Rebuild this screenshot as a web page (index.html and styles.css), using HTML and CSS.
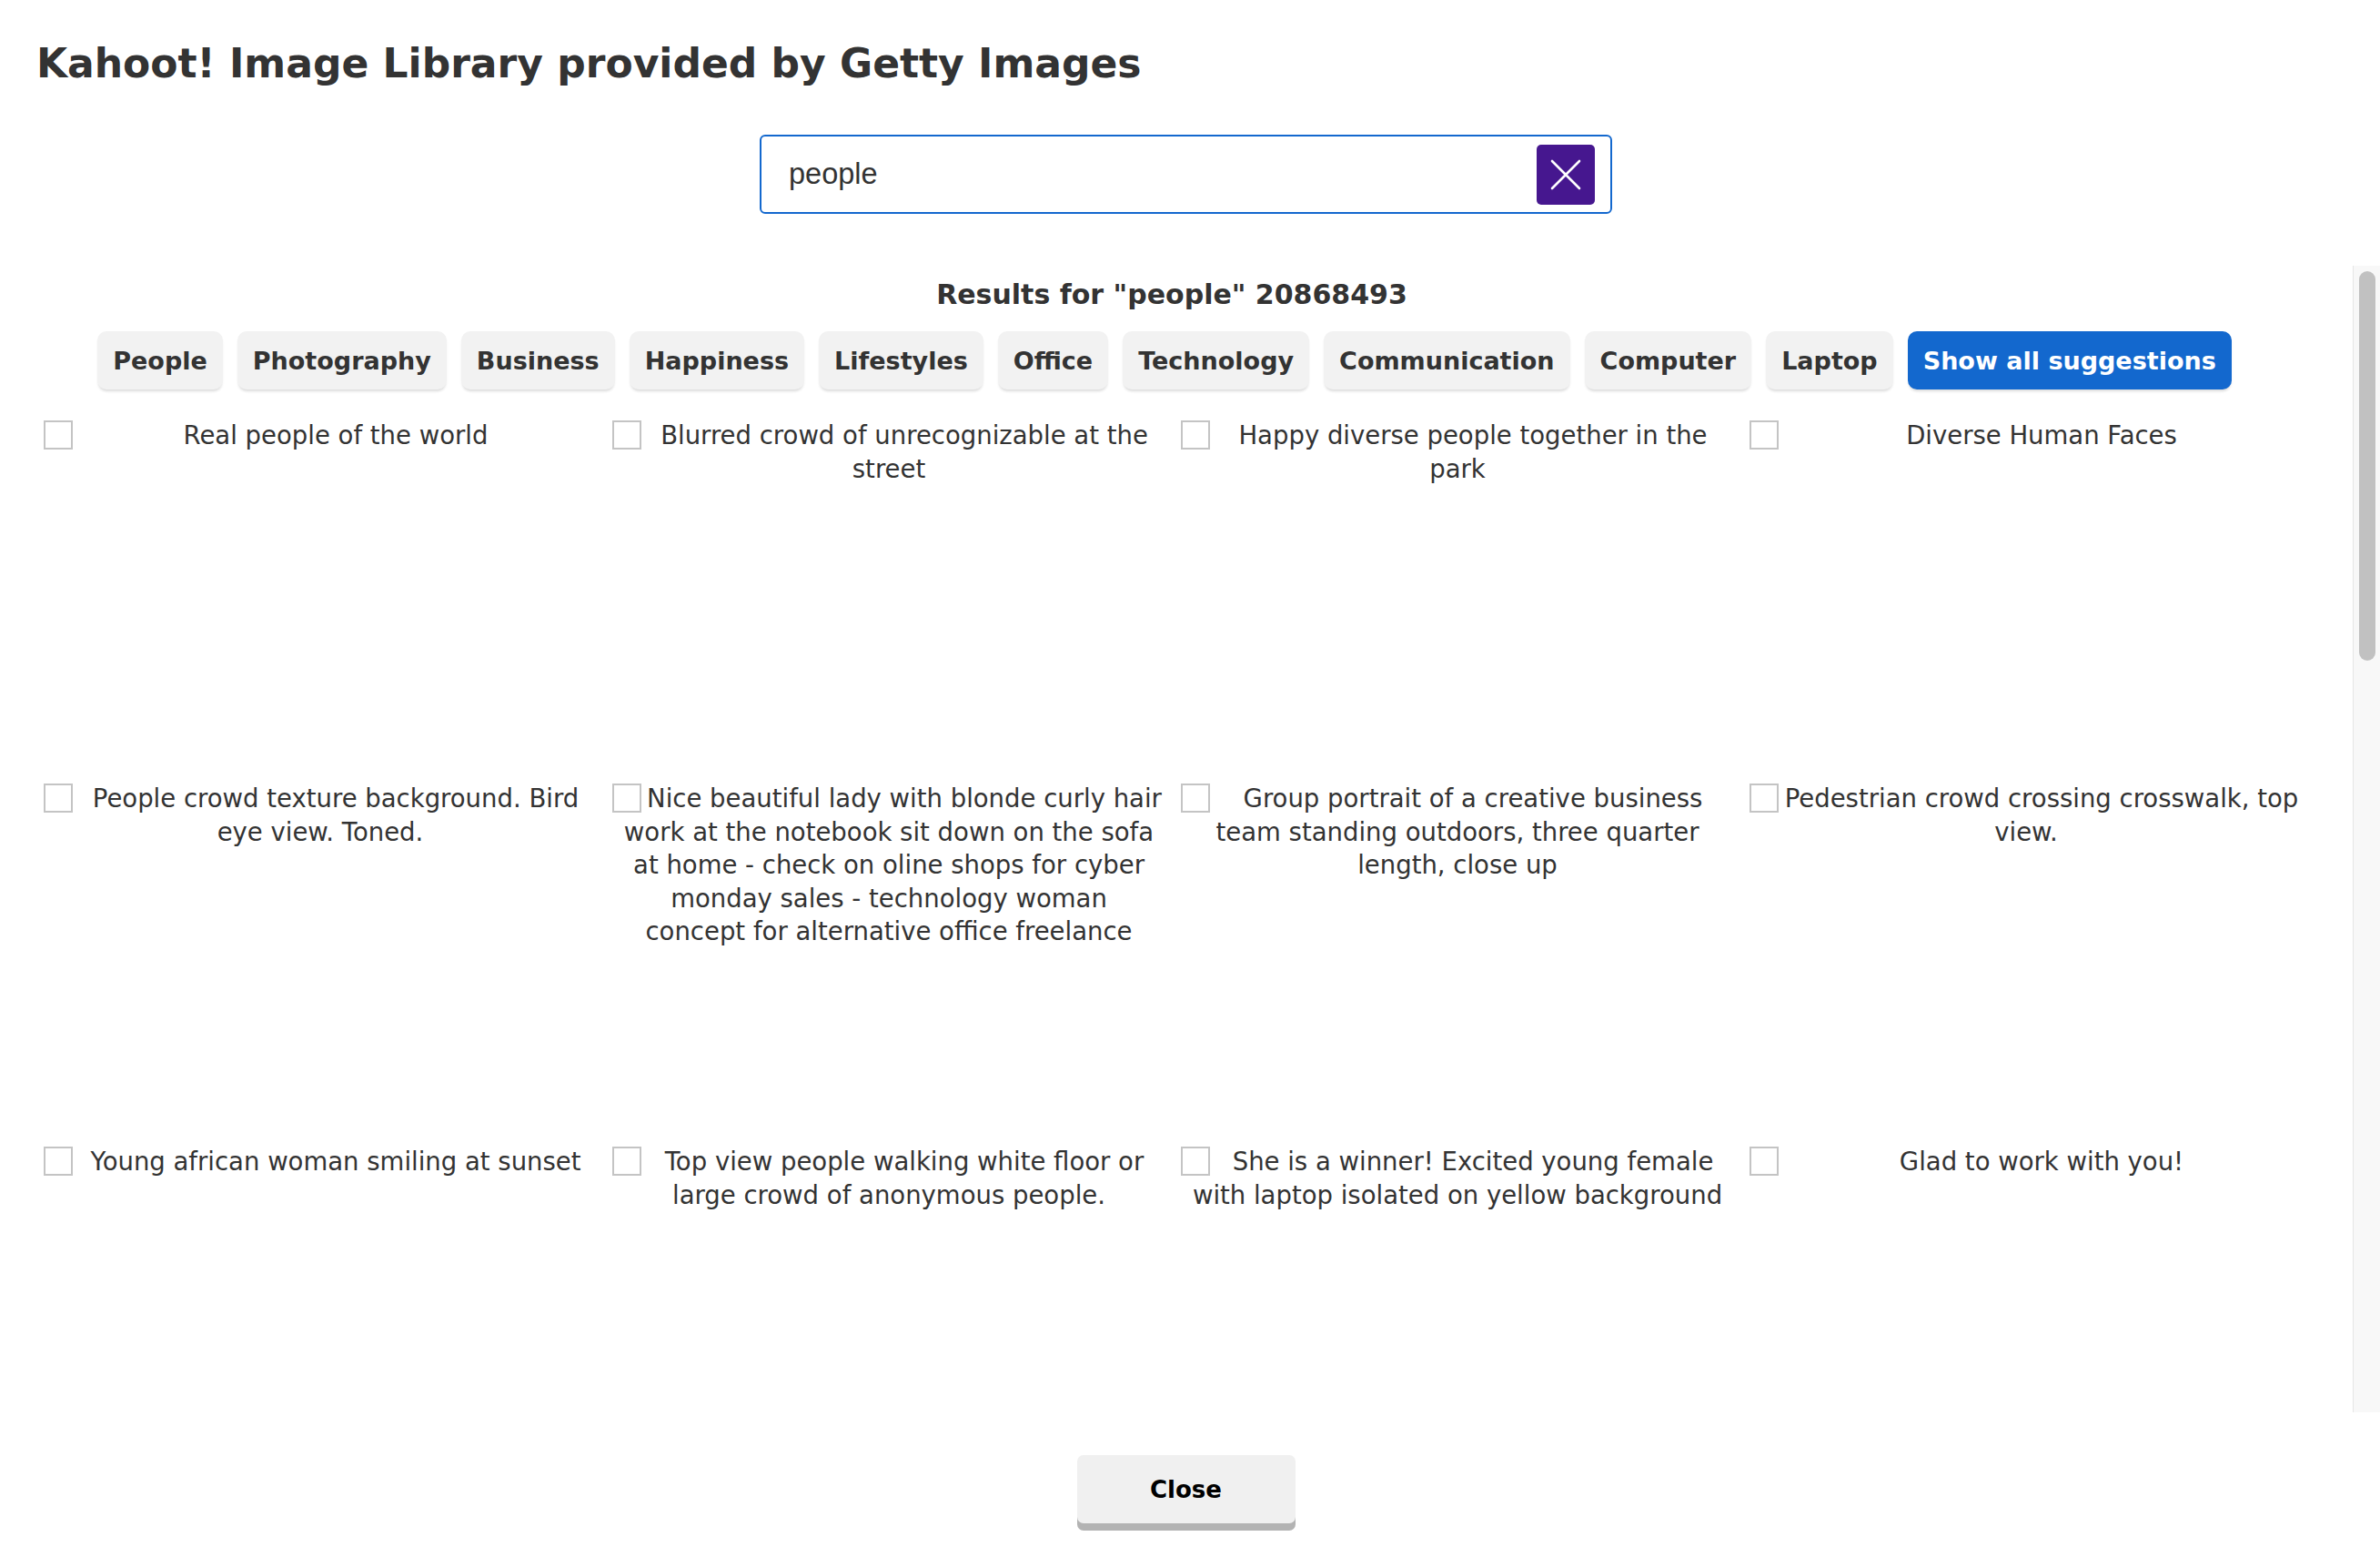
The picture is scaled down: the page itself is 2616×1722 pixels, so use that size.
FILE: index.html
```html
<!DOCTYPE html>
<html lang="en">
<head>
    <meta charset="UTF-8">
    <meta name="viewport" content="width=device-width, initial-scale=1.0">
    <title>Kahoot! Image Library</title>
    <link rel="stylesheet" href="styles.css">
</head>
<body>
    <div class="dialog">
        <h1 class="dialog-title">Kahoot! Image Library provided by Getty Images</h1>

        <div class="search">
            <input class="search-input" type="text" value="people" aria-label="Search images">
            <button class="search-clear" aria-label="Clear search">
                <svg width="34" height="34" viewBox="0 0 34 34">
                    <path d="M2 2 L32 32 M32 2 L2 32" stroke="#fff" stroke-width="2.6" stroke-linecap="round" fill="none"/>
                </svg>
            </button>
        </div>

        <div class="results-pane">
            <div class="results" id="results">
                <h2 class="results-title">Results for "people" 20868493</h2>
                <div class="suggestions">
                    <button class="chip">People</button>
                    <button class="chip">Photography</button>
                    <button class="chip">Business</button>
                    <button class="chip">Happiness</button>
                    <button class="chip">Lifestyles</button>
                    <button class="chip">Office</button>
                    <button class="chip">Technology</button>
                    <button class="chip">Communication</button>
                    <button class="chip">Computer</button>
                    <button class="chip">Laptop</button>
                    <button class="chip chip-primary">Show all suggestions</button>
                </div>

                <div class="image-grid">
                    <label class="image-card"><input type="checkbox" class="pick">Real people of the world</label>
                    <label class="image-card"><input type="checkbox" class="pick">Blurred crowd of unrecognizable at the street</label>
                    <label class="image-card"><input type="checkbox" class="pick">Happy diverse people together in the park</label>
                    <label class="image-card"><input type="checkbox" class="pick">Diverse Human Faces</label>

                    <label class="image-card"><input type="checkbox" class="pick">People crowd texture background. Bird eye view. Toned.</label>
                    <label class="image-card"><input type="checkbox" class="pick">Nice beautiful lady with blonde curly hair work at the notebook sit down on the sofa at home - check on oline shops for cyber monday sales - technology woman concept&nbsp;for alternative office freelance</label>
                    <label class="image-card"><input type="checkbox" class="pick">Group portrait of a creative business team standing outdoors, three quarter length, close up</label>
                    <label class="image-card"><input type="checkbox" class="pick">Pedestrian crowd crossing crosswalk, top view.</label>

                    <label class="image-card"><input type="checkbox" class="pick">Young african woman smiling at sunset</label>
                    <label class="image-card"><input type="checkbox" class="pick">Top view people walking white floor or large crowd of anonymous people.</label>
                    <label class="image-card"><input type="checkbox" class="pick">She is a winner! Excited young female with laptop isolated on yellow background</label>
                    <label class="image-card"><input type="checkbox" class="pick">Glad to work with you!</label>
                </div>
            </div>
            <!-- scroll indicator for the result list -->
            <div class="scrollbar"><div class="scrollbar-thumb"></div></div>
        </div>

        <div class="dialog-footer">
            <button class="close-btn">Close</button>
        </div>
    </div>
</body>
</html>
```

FILE: styles.css
```css
body {
    margin: 0;
    font-family: "DejaVu Sans", sans-serif;
    color: #333;
    background: #fff;
}
.dialog {
    height: 100vh;
    display: flex;
    flex-direction: column;
    overflow: hidden;
}
.dialog-title {
    margin: 0;
    padding: 44px 40px 0;
    font-size: 44px;
    line-height: 52px;
    font-weight: bold;
}

/* search field */
.search {
    display: flex;
    align-items: center;
    box-sizing: border-box;
    width: 937px;
    height: 87px;
    margin: 52px auto 0 calc(50% - 473px);
    padding: 0 17px 0 30px;
    border: 2px solid #1368ce;
    border-radius: 6px;
}
.search-input {
    flex: 1;
    border: none;
    outline: none;
    padding: 0;
    background: transparent;
    font-family: "Liberation Sans", Arial, sans-serif;
    font-size: 32.5px;
    color: #333;
}
.search-clear {
    width: 64px;
    height: 66px;
    padding: 0;
    border: none;
    border-radius: 5px;
    background: #46178f;
    display: flex;
    align-items: center;
    justify-content: center;
    cursor: pointer;
}

/* scrolling result list */
.results-pane {
    flex: 1;
    min-height: 0;
    display: flex;
    margin-top: 57px;
}
.results {
    flex: 1;
    min-width: 0;
    padding-top: 14px;
    overflow-y: auto;
}
.results::-webkit-scrollbar {
    display: none;
}
.scrollbar {
    width: 30px;
    box-sizing: border-box;
    background: #f8f8f8;
    border-left: 1px solid #e6e6e6;
}
.scrollbar-thumb {
    height: 428px;
    margin: 6px 5px 0 6px;
    border-radius: 9px;
    background: #c1c1c1;
}
.results-title {
    margin: 0;
    padding-right: 10px;
    text-align: center;
    font-size: 30px;
    line-height: 36px;
    font-weight: bold;
}
.suggestions {
    display: flex;
    justify-content: center;
    gap: 16px;
    margin-top: 22px;
    padding-right: 26px;
}
.chip {
    height: 64px;
    padding: 0 17px;
    border: none;
    border-radius: 10px;
    background: #f2f2f2;
    box-shadow: 0 3px 3px -1px rgba(0, 0, 0, 0.14);
    font-family: inherit;
    font-size: 27px;
    font-weight: bold;
    color: #333;
    cursor: pointer;
}
.chip-primary {
    background: #1368ce;
    color: #fff;
}

.image-grid {
    display: grid;
    grid-template-columns: repeat(4, 608px);
    grid-auto-rows: 380px;
    gap: 19px 17px;
    padding: 32px 0 40px 48px;
}
.image-card {
    display: block;
    text-align: center;
    font-size: 27.5px;
    line-height: 36.5px;
    color: #333;
}
.pick {
    appearance: none;
    float: left;
    box-sizing: border-box;
    width: 32px;
    height: 32px;
    margin: 2px 2px 0 0;
    border: 2px solid #c4c4c4;
    background: #fff;
}

.dialog-footer {
    display: flex;
    justify-content: center;
    padding: 47px 9px 48px 0;
}
.close-btn {
    width: 240px;
    height: 75px;
    border: none;
    border-radius: 7px;
    background: #f0f0f0;
    box-shadow: 0 8px 0 #b3b3b3;
    font-family: inherit;
    font-size: 26px;
    font-weight: bold;
    color: #000;
    cursor: pointer;
}
```
